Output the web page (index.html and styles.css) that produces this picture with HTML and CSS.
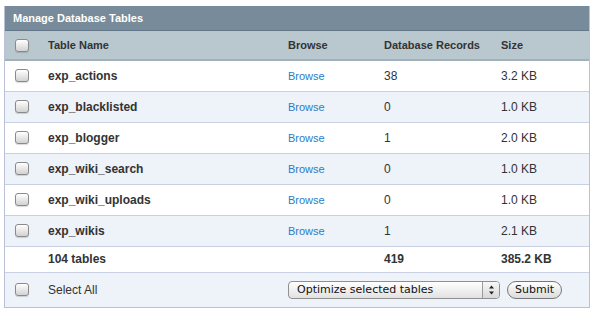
FILE: index.html
```html
<!DOCTYPE html>
<html>
<head>
<meta charset="utf-8">
<link rel="stylesheet" href="styles.css">
</head>
<body>
<div class="panel">
  <div class="title">Manage Database Tables</div>
  <table class="grid">
    <colgroup>
      <col class="c-check"><col class="c-name"><col class="c-browse"><col class="c-rec"><col class="c-size">
    </colgroup>
    <thead>
      <tr><th><span class="cb"></span></th><th>Table Name</th><th>Browse</th><th>Database Records</th><th>Size</th></tr>
    </thead>
    <tbody>
      <tr><td><span class="cb"></span></td><td class="name">exp_actions</td><td><a class="link">Browse</a></td><td>38</td><td>3.2 KB</td></tr>
      <tr class="alt"><td><span class="cb"></span></td><td class="name">exp_blacklisted</td><td><a class="link">Browse</a></td><td>0</td><td>1.0 KB</td></tr>
      <tr><td><span class="cb"></span></td><td class="name">exp_blogger</td><td><a class="link">Browse</a></td><td>1</td><td>2.0 KB</td></tr>
      <tr class="alt"><td><span class="cb"></span></td><td class="name">exp_wiki_search</td><td><a class="link">Browse</a></td><td>0</td><td>1.0 KB</td></tr>
      <tr><td><span class="cb"></span></td><td class="name">exp_wiki_uploads</td><td><a class="link">Browse</a></td><td>0</td><td>1.0 KB</td></tr>
      <tr class="alt"><td><span class="cb"></span></td><td class="name">exp_wikis</td><td><a class="link">Browse</a></td><td>1</td><td>2.1 KB</td></tr>
      <tr class="total"><td></td><td class="name">104 tables</td><td></td><td class="name">419</td><td class="name">385.2 KB</td></tr>
      <tr class="alt foot"><td><span class="cb"></span></td><td>Select All</td><td colspan="3">
        <div class="actions">
          <div class="select"><span class="sel-text">Optimize selected tables</span><span class="sel-arrow"><svg width="7" height="10" viewBox="0 0 7 10"><path d="M3.5 0.5 L6 3.5 H1 Z M3.5 9.5 L6 6.5 H1 Z" fill="#222"/></svg></span></div>
          <div class="btn">Submit</div>
        </div>
      </td></tr>
    </tbody>
  </table>
</div>
</body>
</html>
```

FILE: styles.css
```css
html, body { margin: 0; padding: 0; background: #fff; }
body { font-family: "Liberation Sans", Arial, sans-serif; font-size: 12px; color: #333; }
.panel {
  margin: 6px 0 0 4px;
  width: 586px;
  border: 1px solid #b9c0d8;
  border-top: none;
  box-sizing: border-box;
}
.title {
  height: 25px;
  line-height: 24px;
  background: #778b9a;
  border-bottom: 1px solid #62788a;
  color: #fff;
  font-weight: bold;
  font-size: 11px;
  padding-left: 8px;
  box-sizing: border-box;
}
.grid { width: 100%; border-collapse: collapse; table-layout: fixed; }
.c-check { width: 43px; }
.c-name { width: 240px; }
.c-browse { width: 96px; }
.c-rec { width: 117px; }
.grid th {
  background: #b9c8cf;
  height: 29px;
  text-align: left;
  font-weight: bold;
  font-size: 11px;
  color: #333;
  padding: 0;
  border-bottom: 2px solid #a2b0b9;
  box-sizing: border-box;
}
.grid td {
  height: 31px;
  padding: 0;
  border-bottom: 1px solid #c9d0e3;
  box-sizing: border-box;
  vertical-align: middle;
}
.grid th:first-child, .grid td:first-child { padding-left: 10px; }
.grid tr.alt td { background: #eef2f9; }
.grid tr.total td { height: 26px; }
.grid tr.foot td { height: 35px; border-bottom: none; }
.name { font-weight: bold; }
.link { color: #2a7dc7; text-decoration: none; font-size: 11px; }
.cb {
  display: block;
  width: 12px;
  height: 11px;
  border: 1px solid #8a8a8a;
  border-radius: 3px;
  background: linear-gradient(#ffffff, #e4e4e4 60%, #d2d2d2);
  box-shadow: inset 0 1px 0 #fff, 0 1px 1px rgba(0,0,0,0.15);
}
.actions { display: flex; align-items: center; gap: 7px; }
.select {
  width: 212px;
  height: 18px;
  box-sizing: border-box;
  border: 1px solid #8f8f8f;
  border-radius: 4px;
  background: linear-gradient(#ffffff, #f0f0f0 50%, #e2e2e2);
  display: flex;
  align-items: stretch;
  font-family: "DejaVu Sans", sans-serif;
  font-size: 11px;
  color: #111;
}
.sel-text { flex: 1; padding-left: 8px; line-height: 16px; }
.sel-arrow {
  width: 16px;
  border-left: 1px solid #9a9a9a;
  display: flex; align-items: center; justify-content: center;
  background: linear-gradient(#f8f8f8, #d8d8d8);
  border-radius: 0 3px 3px 0;
}
.btn {
  height: 18px;
  box-sizing: border-box;
  padding: 0 7px;
  border: 1px solid #777;
  border-radius: 9px;
  background: linear-gradient(#ffffff, #ececec 50%, #dcdcdc);
  font-family: "DejaVu Sans", sans-serif;
  font-size: 11px;
  line-height: 16px;
  color: #111;
}
```
